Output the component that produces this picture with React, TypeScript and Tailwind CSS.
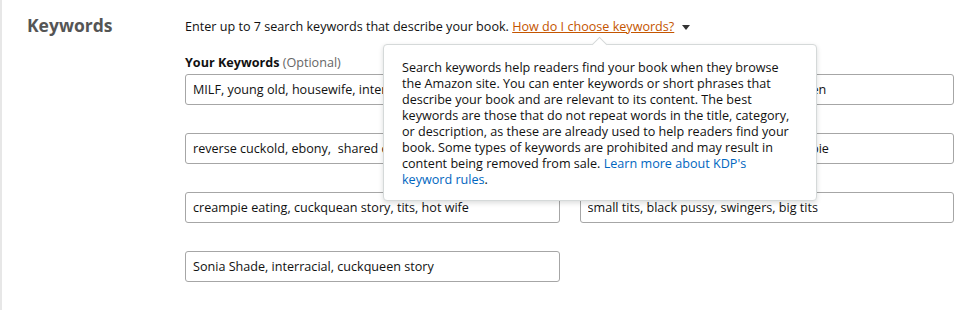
import React from 'react'

const left = [
  'MILF, young old, housewife, interracial, hotwife',
  'reverse cuckold, ebony,  shared cuckqueen story',
  'creampie eating, cuckquean story, tits, hot wife',
  'Sonia Shade, interracial, cuckqueen story',
]

const right = [
  'interracial romance, hot wife, cuckqueen',
  'hot wife stories, wife swapping, creampie',
  'small tits, black pussy, swingers, big tits',
]

function KeywordInput({ value }: { value: string }) {
  return (
    <input
      readOnly
      value={value}
      className="h-[31px] w-full rounded-[3px] border border-[#a6a6a6] bg-white px-[7px] text-[12.6px] text-[#111] outline-none"
    />
  )
}

export default function App() {
  return (
    <div
      className="relative h-[310px] w-[972px] overflow-hidden border-l-2 border-[#e7e7e7] bg-white"
      style={{ fontFamily: '"Open Sans", Arial, sans-serif' }}
    >
      <div className="flex pt-[13px]">
        <div className="w-[183px] pl-[25px]">
          <h2 className="text-[17.5px] font-bold leading-[24px] text-[#555]">Keywords</h2>
        </div>

        <div className="flex-1 pt-[4px]">
          <p className="flex items-center text-[12.6px] leading-[20px] text-[#111]">
            Enter up to 7 search keywords that describe your book.&nbsp;
            <a className="text-[#c45500] underline">How do I choose keywords?</a>
            <span className="ml-[8px] mt-[1px] h-0 w-0 border-x-[4px] border-t-[5px] border-x-transparent border-t-[#333]" />
          </p>

          <p className="mt-[16px] text-[12.6px] leading-[19px] text-[#111]">
            <span className="font-bold">Your Keywords</span>{' '}
            <span className="text-[#666]">(Optional)</span>
          </p>

          <div className="mt-[2px] grid w-[769px] grid-cols-2 gap-x-[20px] gap-y-[28px]">
            <KeywordInput value={left[0]} />
            <KeywordInput value={right[0]} />
            <KeywordInput value={left[1]} />
            <KeywordInput value={right[1]} />
            <KeywordInput value={left[2]} />
            <KeywordInput value={right[2]} />
            <KeywordInput value={left[3]} />
          </div>
        </div>
      </div>

      {/* Popover */}
      <div className="absolute left-[381px] top-[44px] w-[434px] rounded-[4px] border border-[#d5d9d9] bg-white pb-[12px] pl-[18px] pr-[17px] pt-[15px] shadow-[0_2px_5px_rgba(15,17,17,0.15)]">
        <span className="absolute left-[210px] top-[-6px] h-[11px] w-[11px] rotate-45 border-l border-t border-[#d5d9d9] bg-white" />
        <p className="text-[12.6px] leading-[16px] text-[#111]">
          Search keywords help readers find your book when they browse the Amazon site. You can enter keywords or short phrases that describe your book and are relevant to its content. The best keywords are those that do not repeat words in the title, category, or description, as these are already used to help readers find your book. Some types of keywords are prohibited and may result in content being removed from sale.{' '}
          <a className="text-[#0066c0]">Learn more about KDP's keyword rules</a>.
        </p>
      </div>
    </div>
  )
}
